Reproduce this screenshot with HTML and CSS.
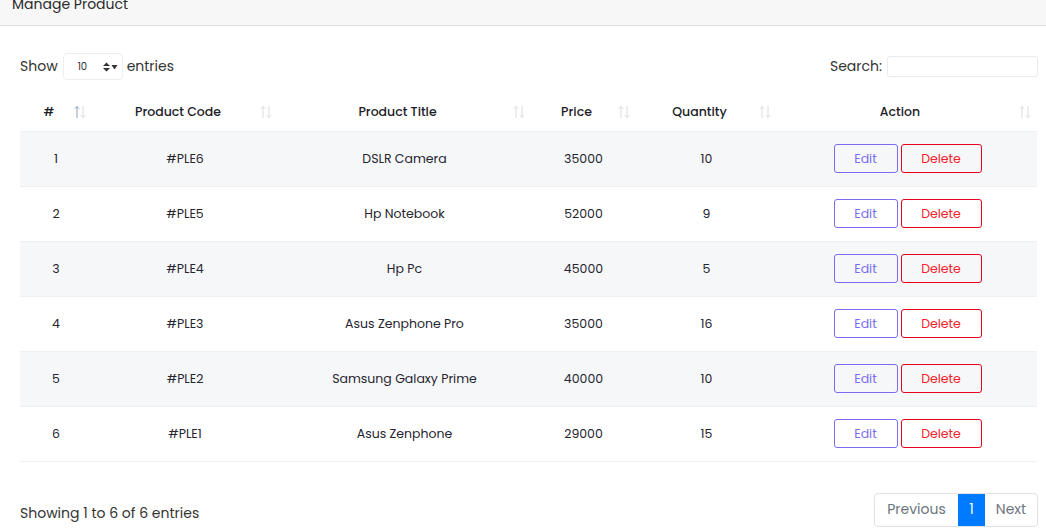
FILE: index.html
```html
<!DOCTYPE html>
<html>
<head>
<meta charset="utf-8">
<link rel="stylesheet" href="styles.css">
</head>
<body>
<div class="page-header"><span class="page-title">Manage Product</span></div>
<div class="content">
  <div class="controls">
    <label class="length">Show
      <span class="select"><span class="select-val">10</span>
        <svg class="select-arrows" width="15" height="10" viewBox="0 0 15 10"><path d="M0 4 L3.5 0.5 L7 4 Z M0 6 L3.5 9.5 L7 6 Z" fill="#333"/><path d="M8.5 3 L14.5 3 L11.5 7.5 Z" fill="#333"/></svg>
      </span>
      entries</label>
    <label class="search">Search: <span class="search-input"></span></label>
  </div>
  <table class="grid">
    <colgroup>
      <col style="width:72px"><col style="width:186px"><col style="width:253px"><col style="width:105px"><col style="width:141px"><col style="width:260px">
    </colgroup>
    <thead>
      <tr>
        <th class="sorted">#<span class="sort"><svg width="12" height="14" viewBox="0 0 12 14"><path d="M3 1.5 V13 M0.8 3.8 L3 1.5 L5.2 3.8" stroke="#8fa3b3" fill="none" stroke-width="1"/><path d="M9 1 V12.5 M6.8 10.2 L9 12.5 L11.2 10.2" stroke="#dcdcdc" fill="none" stroke-width="1"/></svg></span></th>
        <th>Product Code<span class="sort"><svg width="12" height="14" viewBox="0 0 12 14"><path d="M3 1.5 V13 M0.8 3.8 L3 1.5 L5.2 3.8" stroke="#dcdcdc" fill="none"/><path d="M9 1 V12.5 M6.8 10.2 L9 12.5 L11.2 10.2" stroke="#dcdcdc" fill="none"/></svg></span></th>
        <th>Product Title<span class="sort"><svg width="12" height="14" viewBox="0 0 12 14"><path d="M3 1.5 V13 M0.8 3.8 L3 1.5 L5.2 3.8" stroke="#dcdcdc" fill="none"/><path d="M9 1 V12.5 M6.8 10.2 L9 12.5 L11.2 10.2" stroke="#dcdcdc" fill="none"/></svg></span></th>
        <th>Price<span class="sort"><svg width="12" height="14" viewBox="0 0 12 14"><path d="M3 1.5 V13 M0.8 3.8 L3 1.5 L5.2 3.8" stroke="#dcdcdc" fill="none"/><path d="M9 1 V12.5 M6.8 10.2 L9 12.5 L11.2 10.2" stroke="#dcdcdc" fill="none"/></svg></span></th>
        <th>Quantity<span class="sort"><svg width="12" height="14" viewBox="0 0 12 14"><path d="M3 1.5 V13 M0.8 3.8 L3 1.5 L5.2 3.8" stroke="#dcdcdc" fill="none"/><path d="M9 1 V12.5 M6.8 10.2 L9 12.5 L11.2 10.2" stroke="#dcdcdc" fill="none"/></svg></span></th>
        <th>Action<span class="sort"><svg width="12" height="14" viewBox="0 0 12 14"><path d="M3 1.5 V13 M0.8 3.8 L3 1.5 L5.2 3.8" stroke="#dcdcdc" fill="none"/><path d="M9 1 V12.5 M6.8 10.2 L9 12.5 L11.2 10.2" stroke="#dcdcdc" fill="none"/></svg></span></th>
      </tr>
    </thead>
    <tbody>
      <tr class="odd"><td>1</td><td>#PLE6</td><td>DSLR Camera</td><td>35000</td><td>10</td><td><span class="actions"><button class="btn btn-edit">Edit</button><button class="btn btn-delete">Delete</button></span></td></tr>
      <tr><td>2</td><td>#PLE5</td><td>Hp Notebook</td><td>52000</td><td>9</td><td><span class="actions"><button class="btn btn-edit">Edit</button><button class="btn btn-delete">Delete</button></span></td></tr>
      <tr class="odd"><td>3</td><td>#PLE4</td><td>Hp Pc</td><td>45000</td><td>5</td><td><span class="actions"><button class="btn btn-edit">Edit</button><button class="btn btn-delete">Delete</button></span></td></tr>
      <tr><td>4</td><td>#PLE3</td><td>Asus Zenphone Pro</td><td>35000</td><td>16</td><td><span class="actions"><button class="btn btn-edit">Edit</button><button class="btn btn-delete">Delete</button></span></td></tr>
      <tr class="odd"><td>5</td><td>#PLE2</td><td>Samsung Galaxy Prime</td><td>40000</td><td>10</td><td><span class="actions"><button class="btn btn-edit">Edit</button><button class="btn btn-delete">Delete</button></span></td></tr>
      <tr><td>6</td><td>#PLE1</td><td>Asus Zenphone</td><td>29000</td><td>15</td><td><span class="actions"><button class="btn btn-edit">Edit</button><button class="btn btn-delete">Delete</button></span></td></tr>
    </tbody>
  </table>
  <div class="footer">
    <div class="info">Showing 1 to 6 of 6 entries</div>
    <div class="pager">
      <span class="page-item">Previous</span>
      <span class="page-item active">1</span>
      <span class="page-item">Next</span>
    </div>
  </div>
</div>
</body>
</html>
```
FILE: styles.css
```css
* { box-sizing: border-box; }
html, body { margin: 0; padding: 0; background: #fff; }
body {
  font-family: "Poppins", "Inter", "Noto Sans", sans-serif;
  color: #212529;
  width: 1046px;
  height: 532px;
  overflow: hidden;
}
.page-header {
  height: 26px;
  background: #f7f7f7;
  border-bottom: 1px solid #dedede;
  display: flex;
  align-items: flex-end;
  padding: 0 12px 12px;
  overflow: hidden;
}
.page-title {
  font-size: 14px;
  line-height: 18px;
  color: #2b2b2b;
}
.content {
  padding: 27px 8px 0 20px;
}
.controls {
  display: flex;
  justify-content: space-between;
  align-items: center;
  height: 27px;
}
.length, .search {
  display: flex;
  align-items: center;
  font-size: 14px;
  color: #333;
}
.select {
  display: inline-flex;
  align-items: center;
  justify-content: space-between;
  width: 60px;
  height: 27px;
  margin: 0 4px 0 5px;
  padding: 0 4px 0 14px;
  border: 1px solid #eeeeee;
  border-radius: 4px;
  font-size: 10px;
}
.search-input {
  display: inline-block;
  width: 151px;
  height: 21px;
  margin-left: 5px;
  border: 1px solid #ebebeb;
  border-radius: 3px;
}
.grid {
  margin-top: 13px;
  width: 1017px;
  border-collapse: collapse;
  table-layout: fixed;
  font-size: 12.5px;
}
.grid th {
  position: relative;
  height: 38px;
  padding: 1px 24px 0 10px;
  font-weight: 500;
  font-size: 12.5px;
  color: #1c1c28;
  text-align: center;
}
.sort {
  position: absolute;
  right: 6px;
  top: 12px;
  line-height: 0;
}
.grid td {
  height: 55px;
  text-align: center;
  border-top: 1px solid #eef0f2;
  padding: 0;
  color: #25252f;
}
.grid tbody tr:last-child td { border-bottom: 1px solid #eef0f2; }
.grid tr.odd td { background: #f6f7f9; }
.actions { display: inline-flex; gap: 3px; padding-left: 1px; }
.btn {
  font-family: inherit;
  font-size: 12.5px;
  height: 29px;
  background: transparent;
  border-radius: 3px;
  padding: 0;
  cursor: pointer;
}
.btn-edit { width: 64px; border: 1px solid #7a6cf2; color: #7a6cf2; }
.btn-delete { width: 81px; border: 1px solid #e8001f; color: #f5222d; }
.footer {
  margin-top: 31px;
  display: flex;
  justify-content: space-between;
  align-items: center;
}
.info { font-size: 14px; color: #333; padding-top: 8px; }
.pager {
  display: flex;
  border: 1px solid #dee2e6;
  border-radius: 4px;
  height: 34px;
  overflow: hidden;
}
.page-item {
  display: flex;
  align-items: center;
  justify-content: center;
  font-size: 14px;
  color: #6c757d;
}
.page-item:first-child { width: 83px; }
.page-item.active { width: 27px; background: #007bff; color: #fff; }
.page-item:last-child { width: 52px; }
```
